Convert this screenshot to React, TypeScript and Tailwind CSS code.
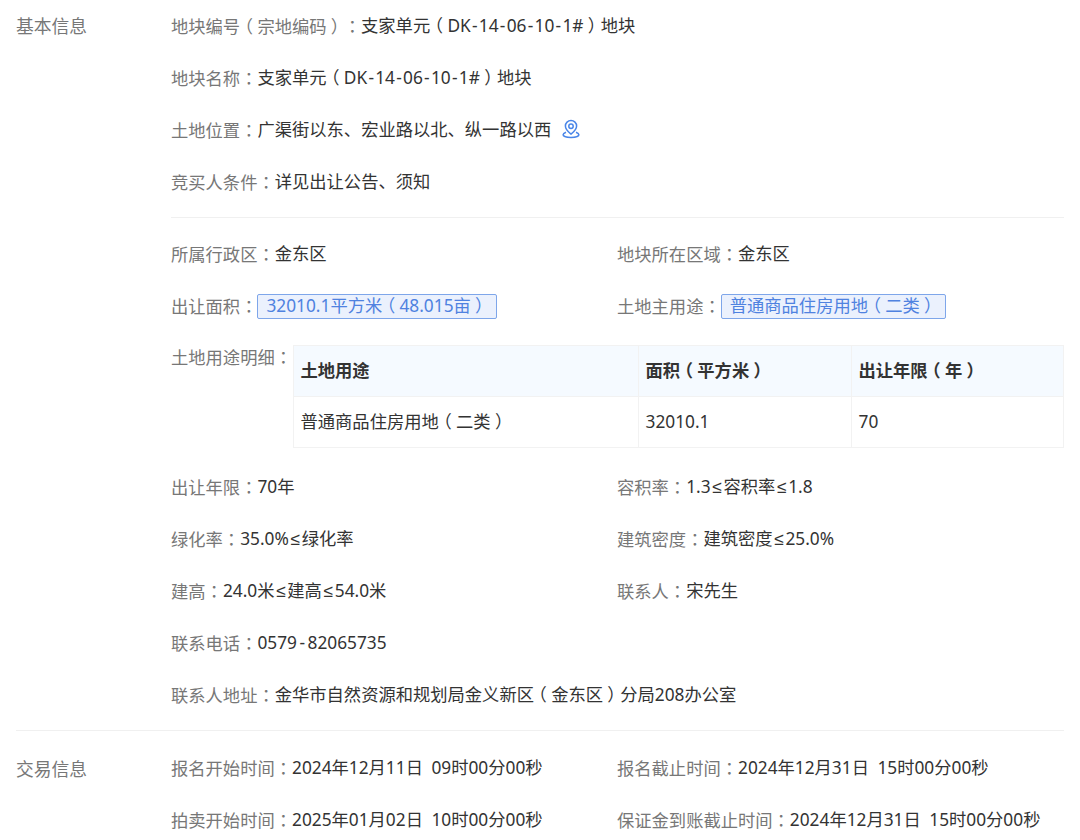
import React from "react";
const T=({t,h="px-[1.25px]"}:{t:string;h?:string})=>(<>{t.split(/([（）：≤\-])/).map((s,i)=>{
  if(s==="（"||s==="）")return <span key={i} className="inline-block px-[4.3px] [font-feature-settings:'halt']">{s}</span>;
  if(s==="：")return <span key={i} className="inline-block font-['Noto_Sans_CJK_TC',sans-serif]">{s}</span>;
  if(s==="≤")return <span key={i} className="px-[1.7px] font-['Liberation_Sans',sans-serif]">{s}</span>;
  if(s==="-")return <span key={i} className={h}>{s}</span>;
  return s;
})}</>);
const F=({l,v,h}:{l:string;v:string;h?:string})=>(<div className="h-[52px] flex items-center whitespace-nowrap"><span className="text-[#777]"><T t={l+"："}/></span><span className="text-[#333]"><T t={v} h={h}/></span></div>);
const R=({a,b}:{a:[string,string];b?:[string,string]})=>(<div className="grid grid-cols-[446px_1fr]"><F l={a[0]} v={a[1]}/>{b?<F l={b[0]} v={b[1]}/>:<div/>}</div>);
const Tag=({t}:{t:string})=>(<span className="text-[#4f82e0] bg-[#ebf1fd] border border-[#7ea6ea] rounded-[2px] px-2 h-[25px] flex items-center"><T t={t}/></span>);
const cell="border border-[#f2f2f2] text-left pl-[6.5px] pr-2";
export default function App(){return(
<div className="w-[1080px] h-[840px] overflow-hidden bg-white text-[17.3px] leading-6 [word-spacing:4px] [text-spacing-trim:space-all] font-['Noto_Sans','Noto_Sans_CJK_SC',sans-serif]">
<div className="flex px-4">
<div className="w-[155px] text-[#777] text-[17.8px] pt-[14px]">基本信息</div>
<div className="flex-1">
<F l="地块编号（宗地编码）" v="支家单元（DK-14-06-10-1#）地块"/>
<F l="地块名称" v="支家单元（DK-14-06-10-1#）地块"/>
<div className="h-[52px] flex items-center whitespace-nowrap"><span className="text-[#777]"><T t="土地位置："/></span><span className="text-[#333]">广渠街以东、宏业路以北、纵一路以西</span><svg className="ml-[10px] -mt-[3px]" width="20" height="20" viewBox="0 0 20 20" fill="none" stroke="#4a86e8" strokeWidth="1.5"><path d="M10 1.5a5.600 5.600 0 0 1 5.600 5.600c0 3-2.800 5.900-5.600 8-2.800-2.100-5.600-5-5.600-8a5.600 5.600 0 0 1 5.600-5.600z"/><circle cx="10" cy="7.200" r="2.200"/><path d="M5 13.200c-1.800.7-2.900 1.600-2.900 2.600 0 1.500 3.500 2.700 7.900 2.700s7.900-1.200 7.900-2.700c0-1-1.100-1.900-2.900-2.600"/></svg></div>
<F l="竞买人条件" v="详见出让公告、须知"/>
<div className="border-t border-[#f0f0f0] mt-[9px] pt-[10px]">
<R a={["所属行政区","金东区"]} b={["地块所在区域","金东区"]}/>
<div className="grid grid-cols-[446px_1fr] whitespace-nowrap">
<div className="h-[52px] flex items-center"><span className="text-[#777]"><T t="出让面积："/></span><Tag t="32010.1平方米（48.015亩）"/></div>
<div className="h-[52px] flex items-center"><span className="text-[#777]"><T t="土地主用途："/></span><Tag t="普通商品住房用地（二类）"/></div>
</div>
<div className="flex mt-[13px] mb-[13px]"><div className="text-[#777] w-[122px] whitespace-nowrap"><T t="土地用途明细："/></div>
<table className="flex-1 border-collapse text-[#333]"><thead><tr className="bg-[#f5faff] h-[51px]"><th className={cell+" w-[345px] font-bold"}><T t="土地用途"/></th><th className={cell+" w-[213px] font-bold"}><T t="面积（平方米）"/></th><th className={cell+" font-bold"}><T t="出让年限（年）"/></th></tr></thead><tbody><tr className="h-[51px]"><td className={cell}><T t="普通商品住房用地（二类）"/></td><td className={cell}>32010.1</td><td className={cell}>70</td></tr></tbody></table></div>
<R a={["出让年限","70年"]} b={["容积率","1.3≤容积率≤1.8"]}/>
<R a={["绿化率","35.0%≤绿化率"]} b={["建筑密度","建筑密度≤25.0%"]}/>
<R a={["建高","24.0米≤建高≤54.0米"]} b={["联系人","宋先生"]}/>
<F l="联系电话" v="0579-82065735" h="px-[2.5px]"/>
<F l="联系人地址" v="金华市自然资源和规划局金义新区（金东区）分局208办公室"/>
</div></div></div>
<div className="px-4 mt-[9px]"><div className="border-t border-[#f0f0f0] flex pt-[11px]"><div className="w-[155px] text-[#777] text-[17.8px] pt-[15px]">交易信息</div><div className="flex-1">
<R a={["报名开始时间","2024年12月11日 09时00分00秒"]} b={["报名截止时间","2024年12月31日 15时00分00秒"]}/>
<R a={["拍卖开始时间","2025年01月02日 10时00分00秒"]} b={["保证金到账截止时间","2024年12月31日 15时00分00秒"]}/>
</div></div></div>
</div>)}
